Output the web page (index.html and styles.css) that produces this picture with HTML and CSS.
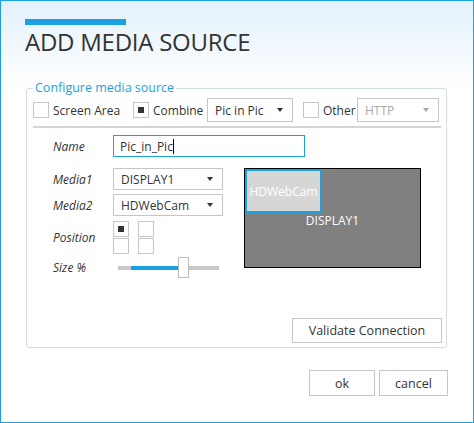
FILE: index.html
```html
<!DOCTYPE html>
<html lang="en">
<head>
<meta charset="utf-8">
<title>Add Media Source</title>
<link rel="stylesheet" href="styles.css">
</head>
<body>
<div class="window">
  <div class="accent"></div>
  <h1 class="title">ADD MEDIA SOURCE</h1>
  <fieldset class="group">
    <legend>Configure media source</legend>
    <div class="source-row">
      <label class="check w-screen"><span class="box"></span>Screen Area</label>
      <label class="check w-combine"><span class="box on"></span>Combine</label>
      <div class="select w-pip">Pic in Pic<span class="arrow"></span></div>
      <label class="check w-other"><span class="box"></span>Other</label>
      <div class="select w-http disabled">HTTP<span class="arrow"></span></div>
    </div>
    <div class="sep"></div>
    <div class="form">
      <div class="row name-row">
        <span class="lbl">Name</span>
        <div class="input">Pic_in_Pic<span class="caret"></span></div>
      </div>
      <div class="media">
        <div class="fields">
          <div class="row r-media1">
            <span class="lbl">Media1</span>
            <div class="select w-media">DISPLAY1<span class="arrow"></span></div>
          </div>
          <div class="row r-media2">
            <span class="lbl">Media2</span>
            <div class="select w-media">HDWebCam<span class="arrow"></span></div>
          </div>
          <div class="row r-pos">
            <span class="lbl">Position</span>
            <div class="pos-grid">
              <span class="box on"></span><span class="box"></span>
              <span class="box"></span><span class="box"></span>
            </div>
          </div>
          <div class="row r-size">
            <span class="lbl">Size %</span>
            <div class="slider">
              <span class="trk trk-a"></span>
              <span class="trk trk-fill"></span>
              <span class="thumb"></span>
              <span class="trk trk-b"></span>
            </div>
          </div>
        </div>
        <div class="preview">
          <div class="pip">HDWebCam</div>
          <span class="main-label">DISPLAY1</span>
        </div>
      </div>
    </div>
    <div class="validate-row">
      <button class="btn btn-validate">Validate Connection</button>
    </div>
  </fieldset>
  <div class="actions">
    <button class="btn btn-ok">ok</button>
    <button class="btn btn-cancel">cancel</button>
  </div>
</div>
</body>
</html>
```
FILE: styles.css
```css
* { box-sizing: border-box; }
html, body { margin: 0; padding: 0; }
body {
  font-family: "Open Sans", "Noto Sans", sans-serif;
  font-size: 12px;
  color: #333;
  background: #fff;
}
.window {
  width: 474px;
  height: 423px;
  border: 1px solid #1ba1e2;
  background: linear-gradient(#e3f1fb 0, #ffffff 88px);
  padding: 18px 0 0 24px;
}
.accent {
  width: 101px;
  height: 6px;
  background: #1ba1e2;
}
.title {
  margin: 4px 0 0;
  font-weight: 400;
  font-size: 24px;
  line-height: 26px;
  letter-spacing: -0.25px;
  color: #333;
  white-space: nowrap;
}
.group {
  margin: 25px 0 0 1px;
  width: 421px;
  min-width: 0;
  border: 1px solid #d3dde4;
  border-radius: 3px;
  padding: 2px 5px 4px 6px;
}
.group legend {
  padding: 0 2px;
  font-size: 12.5px;
  line-height: 16px;
  color: #1ba1e2;
}
.source-row {
  display: flex;
  align-items: center;
  height: 24px;
}
.check {
  display: flex;
  align-items: center;
  gap: 4px;
  white-space: nowrap;
}
.w-screen { width: 100px; }
.w-combine { width: 74px; }
.w-other { width: 54px; }
.box {
  width: 16px;
  height: 16px;
  border: 1px solid #c6c6c6;
  background: #fff;
  display: flex;
  align-items: center;
  justify-content: center;
  flex: none;
}
.box.on::after {
  content: "";
  width: 6px;
  height: 6px;
  background: #333;
}
.select {
  display: flex;
  align-items: center;
  justify-content: space-between;
  height: 24px;
  border: 1px solid #c6c6c6;
  background: #fff;
  padding: 0 9px 0 7px;
  white-space: nowrap;
}
.select .arrow {
  width: 0;
  height: 0;
  border-left: 3.5px solid transparent;
  border-right: 3.5px solid transparent;
  border-top: 4px solid #333;
}
.select.disabled { color: #a8a8a8; }
.select.disabled .arrow { border-top-color: #a8a8a8; }
.w-pip { width: 86px; margin-right: 10px; }
.w-http { width: 82px; }
.w-media { width: 110px; height: 22px; }
.sep {
  height: 2px;
  background: #d4d4d4;
  margin-top: 4px;
}
.form {
  padding-left: 20px;
  margin-top: 7px;
}
.row {
  display: flex;
  align-items: center;
}
.lbl {
  width: 60px;
  flex: none;
  font-style: italic;
}
.input {
  display: flex;
  align-items: center;
  width: 192px;
  height: 22px;
  border: 1px solid #1ba1e2;
  padding-left: 6px;
  background: #fff;
}
.caret {
  width: 1px;
  height: 15px;
  background: #000;
}
.media {
  display: flex;
  align-items: flex-start;
  gap: 21px;
  margin-top: 11px;
}
.fields {
  display: flex;
  flex-direction: column;
}
.r-media2 { margin-top: 4px; }
.r-pos { margin-top: 5px; }
.r-size { margin-top: 3px; }
.pos-grid {
  display: grid;
  grid-template-columns: 16px 16px;
  column-gap: 9px;
  row-gap: 1px;
}
.slider {
  display: flex;
  align-items: center;
  margin-left: 5px;
}
.trk { height: 4px; background: #c8c8c8; }
.trk-a { width: 13px; }
.trk-fill { width: 47px; background: #1ba1e2; }
.trk-b { width: 30px; }
.thumb {
  width: 11px;
  height: 21px;
  border: 1px solid #bdbdbd;
  background: #fff;
}
.preview {
  position: relative;
  width: 177px;
  height: 100px;
  border: 1px solid #000;
  background: #808080;
  display: flex;
  align-items: center;
  justify-content: center;
  color: #fff;
}
.pip {
  position: absolute;
  left: 0;
  top: 0;
  width: 77px;
  height: 44px;
  border: 2px solid #1ba1e2;
  background: #d6d6d6;
  display: flex;
  align-items: center;
  justify-content: center;
  color: #fff;
}
.main-label { margin-top: 4px; }
.validate-row {
  display: flex;
  justify-content: flex-end;
  margin-top: 40px;
}
.btn {
  font-family: inherit;
  font-size: 12.5px;
  color: #333;
  background: #fff;
  border: 1px solid #c6c6c6;
  border-radius: 0;
  padding: 0;
}
.btn-validate { width: 150px; height: 25px; margin-right: -1px; }
.actions {
  display: flex;
  justify-content: flex-end;
  gap: 4px;
  margin: 22px 25px 0 0;
}
.btn-ok { width: 66px; height: 26px; }
.btn-cancel { width: 69px; height: 26px; }
```
